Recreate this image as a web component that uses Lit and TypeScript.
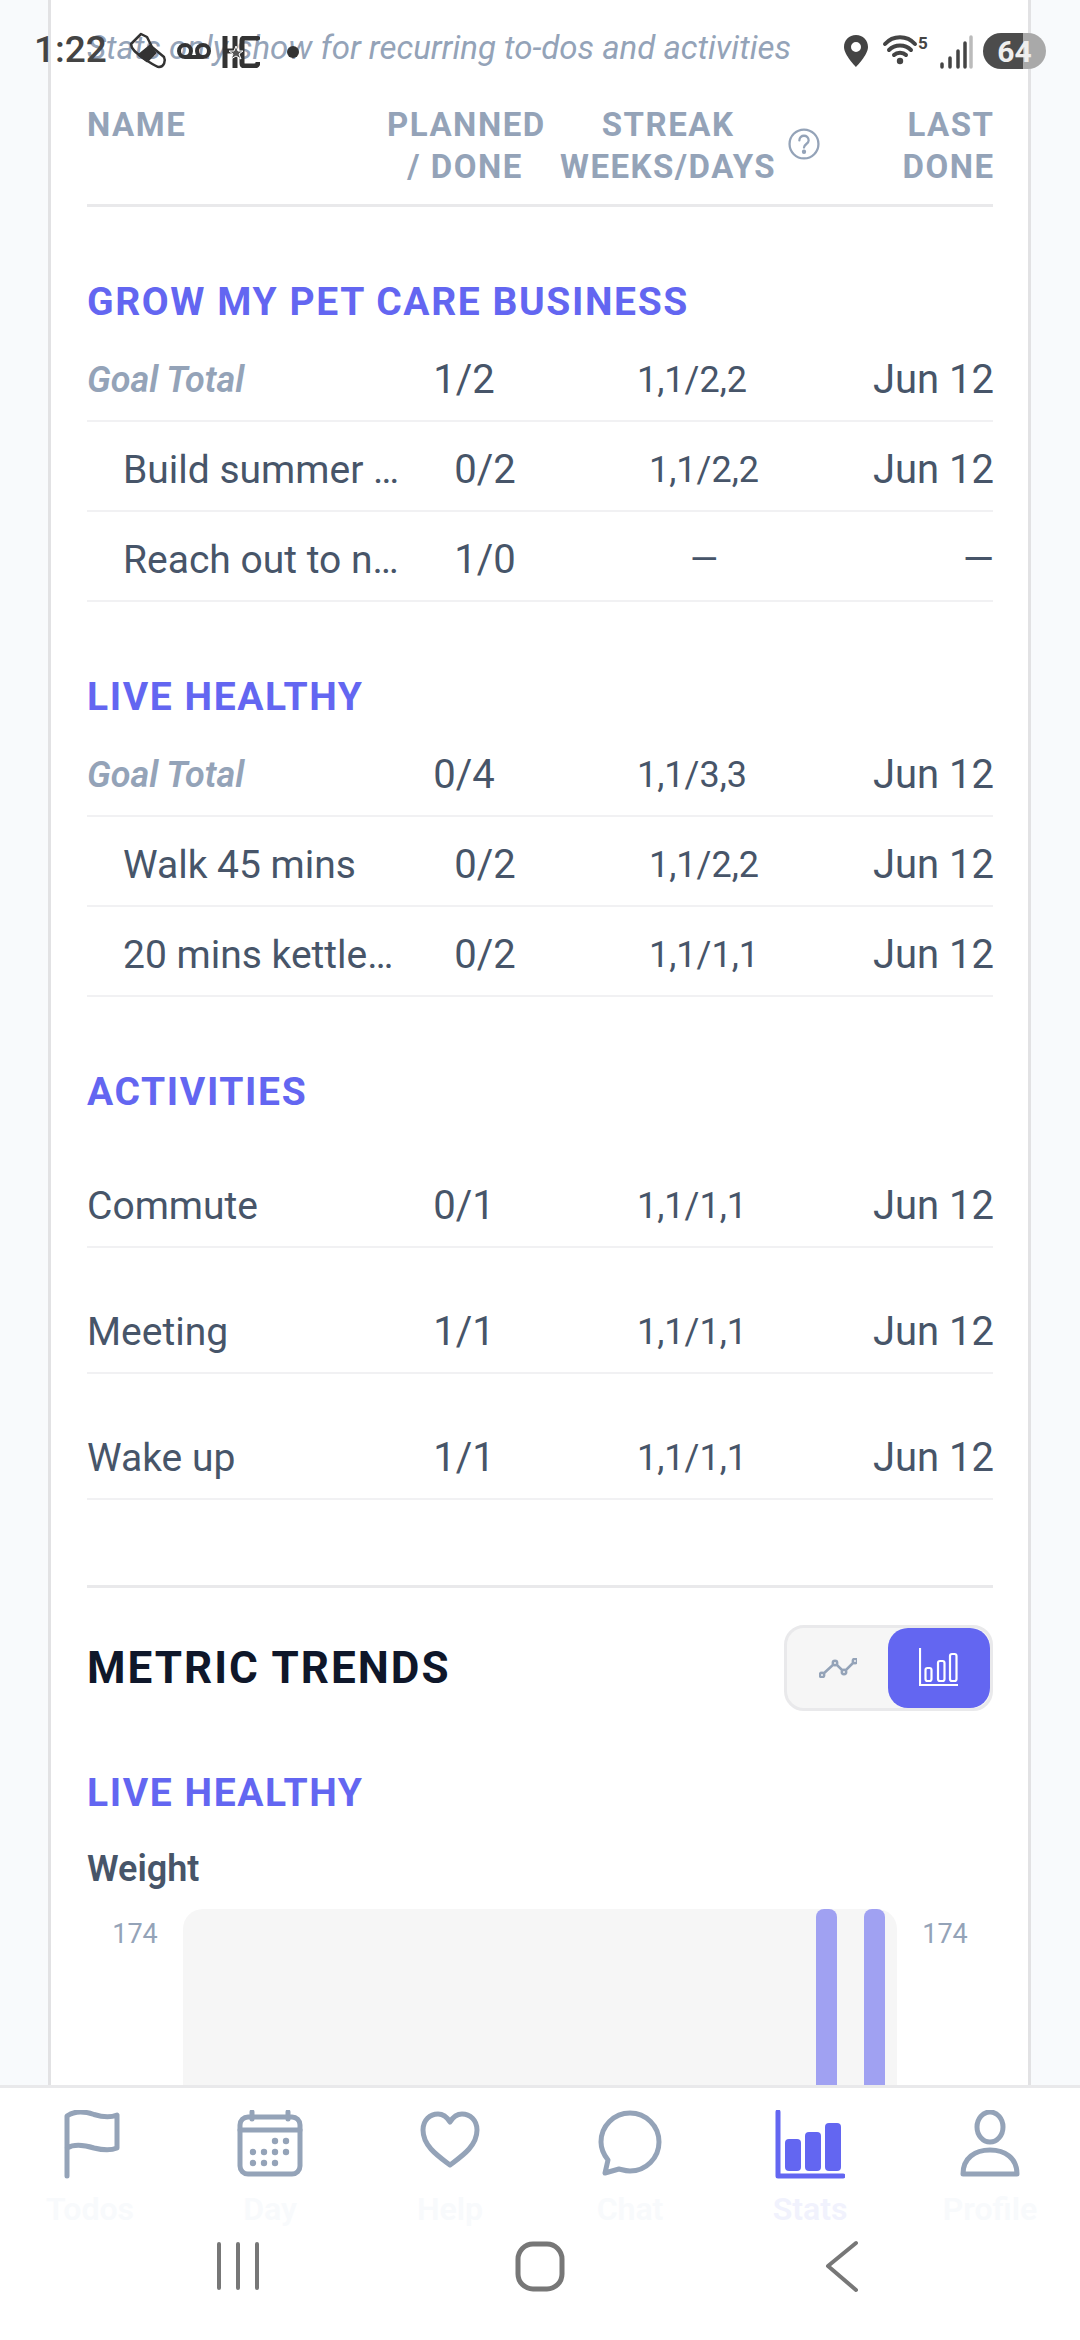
import { LitElement, html, css, svg } from "lit";
import { customElement } from "lit/decorators.js";

type Row = [string, string, string, string];
const group = (t: string, total: Row, kids: Row[]) => ({ t, total, kids });
const groups = [
  group("Grow my pet care business", ["Goal Total", "1/2", "1,1/2,2", "Jun 12"], [
    ["Build summer …", "0/2", "1,1/2,2", "Jun 12"],
    ["Reach out to n…", "1/0", "—", "—"],
  ]),
  group("Live healthy", ["Goal Total", "0/4", "1,1/3,3", "Jun 12"], [
    ["Walk 45 mins", "0/2", "1,1/2,2", "Jun 12"],
    ["20 mins kettle…", "0/2", "1,1/1,1", "Jun 12"],
  ]),
];
const activities: Row[] = [
  ["Commute", "0/1", "1,1/1,1", "Jun 12"],
  ["Meeting", "1/1", "1,1/1,1", "Jun 12"],
  ["Wake up", "1/1", "1,1/1,1", "Jun 12"],
];

const navIcons = {
  flag: svg`<path d="M3 66V6C10 1 20 1 30 4.500C38 7 46 8 53 5V38C46 41 38 40 30 38C20 35 10 34 3 38" />`,
  day: svg`<path d="M14 2V9M50 2V9" /><rect x="2" y="7" width="60" height="57" rx="8"/><path d="M2 20H62" />
    <g fill="#94a3b8" stroke="none"><circle cx="37" cy="31" r="3.200"/><circle cx="48" cy="31" r="3.200"/><circle cx="15" cy="42" r="3.200"/><circle cx="26" cy="42" r="3.200"/><circle cx="37" cy="42" r="3.200"/><circle cx="48" cy="42" r="3.200"/><circle cx="15" cy="53" r="3.200"/><circle cx="26" cy="53" r="3.200"/><circle cx="37" cy="53" r="3.200"/></g>`,
  help: svg`<path d="M30 55C18 46 3 36 3 20C3 10 10 4 18 4C23 4 27 7 30 12C33 7 37 4 42 4C50 4 57 10 57 20C57 36 42 46 30 55Z" />`,
  chat: svg`<path d="M32 3C48 3 61 16 61 32C61 48 48 61 32 61C28 61 25 60 21 59L7 63L10 50C6 45 3 39 3 32C3 16 16 3 32 3Z" />`,
  profile: svg`<ellipse cx="30" cy="17" rx="13" ry="15" /><path d="M3 64C3 48 15 40 30 40C45 40 57 48 57 64Z" />`,
};

@customElement("app-root")
export class AppRoot extends LitElement {
  static styles = css`
    :host { display: block; font-family: Roboto, "Liberation Sans", sans-serif; }
    * { box-sizing: border-box; }
    .page { position: relative; width: 1080px; height: 2340px; background: #f8fafc; overflow: hidden; display: flex; flex-direction: column; }
    .main { flex: 1; min-height: 0; overflow: hidden; }
    .card { width: 983px; margin-left: 48px; height: 100%; background: #fff; border-left: 3px solid #e2e2e4; border-right: 3px solid #e2e2e4; padding: 24px 35px 0 36px; overflow: hidden; }
    .note { margin: 0; height: 48px; font-style: italic; font-size: 33px; line-height: 48px; color: #94a3b8; white-space: nowrap; }
    .thead { display: grid; grid-template-columns: 300px 156px 1fr 133px; height: 135px; padding-top: 32px; border-bottom: 3px solid #e9e9eb; font-weight: 700; font-size: 33px; letter-spacing: 1.500px; line-height: 42px; color: #94a3b8; text-transform: uppercase; }
    .thead .pl { text-align: center; white-space: nowrap; }
    .thead .st { display: flex; align-items: center; padding-left: 17px; gap: 12px; height: 84px; text-align: center; white-space: nowrap; }
    .thead .la { text-align: right; margin-right: -1.500px; }
    .help { width: 32px; height: 32px; flex: none; margin-top: -4px; }
    .group { padding-top: 71px; }
    .group.act { padding-bottom: 85px; }
    h3 { margin: 0; font-size: 39px; font-weight: 700; line-height: 48px; letter-spacing: 1.600px; color: #6366f1; text-transform: uppercase; white-space: nowrap; }
    .rows { margin-top: 6px; }
    .row { display: grid; align-items: center; height: 90px; padding-top: 7px; border-bottom: 2px solid #f1f1f3; font-size: 40px; color: #475569; white-space: nowrap; }
    .row.total { grid-template-columns: 317px 120px 336px 134px; }
    .row.total .nm { font-style: italic; font-weight: 600; font-size: 36px; color: #94a3b8; }
    .row.kid { grid-template-columns: 302px 120px 318px 131px; padding-left: 36px; }
    .row.act { grid-template-columns: 317px 120px 336px 134px; height: 126px; padding-top: 43px; }
    .nm { font-size: 39px; }
    .c { text-align: center; }
    .s { text-align: center; font-size: 36px; }
    .r { text-align: right; }
    .sep { height: 3px; background: #e9e9eb; }
    .trend-head { display: flex; justify-content: space-between; align-items: center; margin-top: 37px; height: 86px; }
    h2 { margin: 0; font-size: 44px; font-weight: 700; letter-spacing: 2px; color: #0f172a; text-transform: uppercase; }
    .toggle { display: flex; width: 209px; height: 86px; border: 3px solid #e9e9eb; border-radius: 20px; background: #f6f6f6; overflow: hidden; }
    .toggle div { flex: 1; display: flex; align-items: center; justify-content: center; border-radius: 20px; }
    .toggle .on { background: #6366f1; flex: 0 0 102px; }
    .lh { margin-top: 58px; }
    .weight { margin-top: 28px; font-size: 36px; line-height: 48px; font-weight: 600; color: #475569; }
    .chart { display: grid; grid-template-columns: 96px 714px 96px; margin-top: 16px; }
    .axis { font-size: 27px; line-height: 36px; color: #94a3b8; padding-top: 7px; text-align: center; }
    .plot { height: 300px; background: #f6f6f6; border-radius: 20px 20px 0 0; display: flex; justify-content: flex-end; gap: 27px; padding-right: 12px; }
    .bar { width: 21px; background: #a0a1f2; border-radius: 8px 8px 0 0; }
    .nav { flex: 0 0 255px; background: #fff; border-top: 3px solid #e9e9eb; display: flex; flex-direction: column; }
    .tabs { display: grid; grid-template-columns: repeat(6, 180px); height: 150px; padding-top: 22px; }
    .tab { display: flex; flex-direction: column; align-items: center; font-size: 32px; font-weight: 600; line-height: 36px; color: #f8fafc; gap: 11px; }
    .tab.on { color: #f1f2fd; }
    .tab svg { height: 70px; width: 70px; fill: none; stroke: #94a3b8; stroke-width: 5; stroke-linecap: round; stroke-linejoin: round; }
    .sys { flex: 1; display: grid; grid-template-columns: repeat(3, 302px); justify-content: center; justify-items: center; align-items: start; padding-top: 2px; }
    .sys svg { width: 60px; height: 56px; fill: none; stroke: #777; stroke-width: 5; stroke-linecap: round; stroke-linejoin: round; }
    .status { position: absolute; left: 0; top: 0; right: 0; height: 92px; color: #444; }
    .time { position: absolute; left: 34px; top: 28px; font-size: 37px; line-height: 44px; font-weight: 500; }
    .si { position: absolute; }
    .batt { position: absolute; left: 983px; top: 33px; width: 63px; height: 36px; border-radius: 18px; background: linear-gradient(90deg, #4c4c4c 0 40px, #a9a9a9 40px); color: #eee; font-size: 30px; font-weight: 700; line-height: 37px; text-align: center; }
  `;

  private row(r: Row, cls: string) {
    return html`<div class="row ${cls}"><div class="nm">${r[0]}</div><div class="c">${r[1]}</div><div class="s">${r[2]}</div><div class="r">${r[3]}</div></div>`;
  }

  render() {
    return html`<div class="page">
      <div class="main"><div class="card">
        <p class="note">Stats only show for recurring to-dos and activities</p>
        <div class="thead">
          <div>Name</div>
          <div class="pl">Planned<br />/ Done</div>
          <div class="st"><div>Streak<br />Weeks/Days</div>
            <svg class="help" viewBox="0 0 31 31" fill="none" stroke="#94a3b8" stroke-width="2.200"><circle cx="15.500" cy="15.500" r="14"/><path d="M11 12C11 6 20 6 20 12C20 15.500 15.500 15.500 15.500 19" stroke-linecap="round"/><circle cx="15.500" cy="23" r="1" fill="#94a3b8"/></svg></div>
          <div class="la">Last<br />Done</div>
        </div>
        ${groups.map((g) => html`<section class="group">
          <h3>${g.t}</h3>
          <div class="rows">${this.row(g.total, "total")}${g.kids.map((k) => this.row(k, "kid"))}</div>
        </section>`)}
        <section class="group act"><h3>Activities</h3><div class="rows">${activities.map((a) => this.row(a, "act"))}</div></section>
        <div class="sep"></div>
        <div class="trend-head"><h2>Metric Trends</h2>
          <div class="toggle">
            <div><svg width="38" height="20" viewBox="0 0 38 20" fill="none" stroke="#94a3b8" stroke-width="2.500"><path d="M3 17L16 5L25 14L36 3"/><circle cx="3" cy="17" r="2.200" fill="#f6f6f6"/><circle cx="16" cy="5" r="2.200" fill="#f6f6f6"/><circle cx="25" cy="14" r="2.200" fill="#f6f6f6"/><circle cx="36" cy="3" r="2.200" fill="#f6f6f6"/></svg></div>
            <div class="on"><svg width="40" height="40" viewBox="0 0 40 40" fill="none" stroke="#fff" stroke-width="2.200"><path d="M1 0V37H39"/><rect x="6.500" y="20" width="6" height="13" rx="2"/><rect x="19" y="13" width="6.500" height="20" rx="2"/><rect x="31" y="6" width="6.500" height="27" rx="2"/></svg></div>
          </div>
        </div>
        <h3 class="lh">Live healthy</h3>
        <div class="weight">Weight</div>
        <div class="chart"><div class="axis">174</div><div class="plot"><div class="bar"></div><div class="bar"></div></div><div class="axis">174</div></div>
      </div></div>
      <div class="nav">
        <div class="tabs">
          <div class="tab"><svg viewBox="-2 0 56 70">${navIcons.flag}</svg>Todos</div>
          <div class="tab"><svg viewBox="0 0 64 70">${navIcons.day}</svg>Day</div>
          <div class="tab"><svg viewBox="0 0 60 70">${navIcons.help}</svg>Help</div>
          <div class="tab"><svg viewBox="0 0 64 70">${navIcons.chat}</svg>Chat</div>
          <div class="tab on"><svg viewBox="0 0 70 70" style="stroke:#6366f1"><path d="M3 2V66H68"/><g fill="#6366f1" stroke="none"><rect x="10" y="29" width="16" height="32" rx="4"/><rect x="30" y="22" width="16" height="39" rx="4"/><rect x="50" y="13" width="16" height="48" rx="4"/></g></svg>Stats</div>
          <div class="tab"><svg viewBox="0 0 60 70">${navIcons.profile}</svg>Profile</div>
        </div>
        <div class="sys">
          <svg viewBox="0 0 60 56"><path d="M11 4V48M30 4V48M49 4V48" stroke-width="4"/></svg>
          <svg viewBox="0 0 60 56"><rect x="8" y="4" width="44" height="45" rx="15"/></svg>
          <svg viewBox="0 0 60 56"><path d="M44 3L16 26L44 50" stroke-width="4"/></svg>
        </div>
      </div>
      <div class="status">
        <div class="time">1:22</div>
        <svg class="si" style="left:129px;top:32px" width="38" height="38" viewBox="0 0 38 38" fill="none" stroke="#333" stroke-width="2.500" stroke-linejoin="round"><path d="M2 12L12 2L18 5L23 15L35 25C37 29 35 35 30 35C27 35 22 31 14 26C7 21 2 17 2 12Z"/><path d="M10 23L21 14L26 21L18 29Z" fill="#333"/></svg>
        <svg class="si" style="left:176px;top:40px" width="36" height="22" viewBox="0 0 36 22" fill="none" stroke="#333" stroke-width="4"><circle cx="9" cy="11" r="6"/><circle cx="27" cy="11" r="6"/><path d="M9 17H27"/></svg>
        <svg class="si" style="left:222px;top:36px" width="38" height="32" viewBox="0 0 38 32" fill="none" stroke="#333" stroke-width="5"><path d="M3 0V32M13 0V32M3 15H13"/><path d="M37 4C36 2 35 2 32 2H23C21 2 20 3 20 5V27C20 29 21 30 23 30H32C35 30 36 29 36 26"/><path d="M14 10L16 15H21L17 18L19 23L14 20L9 23L11 18L7 15H12Z" fill="#555" stroke="#fff" stroke-width="1"/></svg>
        <svg class="si" style="left:286px;top:45px" width="14" height="14" viewBox="0 0 14 14"><circle cx="7" cy="7" r="6" fill="#333"/></svg>
        <svg class="si" style="left:843px;top:34px" width="26" height="34" viewBox="0 0 26 34"><path fill-rule="evenodd" fill="#444" d="M13 1C6 1 1 6 1 13C1 21 13 33 13 33C13 33 25 21 25 13C25 6 20 1 13 1ZM13 8A5 5 0 1 1 13 18A5 5 0 1 1 13 8Z"/></svg>
        <svg class="si" style="left:882px;top:32px" width="50" height="36" viewBox="0 0 50 36" fill="none" stroke="#444" stroke-width="4" stroke-linecap="round"><path d="M3 12C11 3 25 3 33 12M7 18C13 12 23 12 29 18M12 23C15 20 21 20 24 23"/><circle cx="18" cy="29" r="3.200" fill="#444" stroke="none"/><text x="36" y="17" font-size="17" font-weight="700" font-family="Roboto" fill="#444" stroke="none">5</text></svg>
        <svg class="si" style="left:939px;top:34px" width="34" height="36" viewBox="0 0 34 36" stroke-width="3.500" stroke-linecap="round"><path stroke="#444" d="M3 33V30M11 33V24M19 33V17M26 33V9"/><path stroke="#bbb" d="M32 33V3"/></svg>
        <div class="batt">64</div>
      </div>
    </div>`;
  }
}
